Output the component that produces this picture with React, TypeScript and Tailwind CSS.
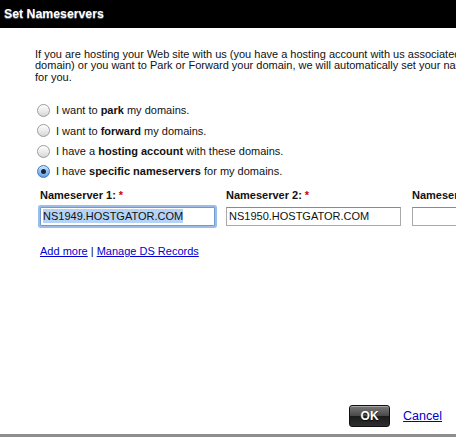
import { ReactNode } from "react";

const font = "font-['Liberation_Sans',Arial,sans-serif]";

interface RadioRowProps {
    checked?: boolean;
    children: ReactNode;
}

const RadioRow = ({ checked, children }: RadioRowProps) => (
    <div className="flex h-[20.4px] items-center">
        {checked ? (
            <span className="ml-[2px] flex h-[13px] w-[13px] items-center justify-center rounded-full border border-[#4a7ab8] bg-[radial-gradient(circle_at_50%_35%,#d8ecff_0%,#7fb6ef_55%,#3d84d6_100%)] shadow-[inset_0_1px_1px_rgba(255,255,255,0.7)]">
                <span className="h-[5px] w-[5px] rounded-full bg-[#16243a]" />
            </span>
        ) : (
            <span className="ml-[2px] h-[13px] w-[13px] rounded-full border border-[#9b9b9b] bg-[linear-gradient(180deg,#fdfdfd_0%,#ececec_50%,#d6d6d6_100%)] shadow-[inset_0_1px_1px_rgba(255,255,255,0.9)]" />
        )}
        <span className="ml-[6px] whitespace-nowrap text-[11px] text-[#111]">{children}</span>
    </div>
);

interface NsFieldProps {
    label: string;
    value?: string;
    focused?: boolean;
    required?: boolean;
}

const NsField = ({ label, value, focused, required }: NsFieldProps) => (
    <div className="flex w-[175px] shrink-0 flex-col">
        <div className="h-[12px] whitespace-nowrap text-[11px] font-bold leading-[12px] text-[#111]">
            {label}
            {required && <span className="ml-[3px] text-[#d40000]">*</span>}
        </div>
        <div
            className={
                focused
                    ? "mt-[6px] flex h-[19px] items-center rounded-[1px] border border-[#6f9bd4] bg-white px-[2px] shadow-[0_0_0_2px_rgba(124,166,224,0.75)]"
                    : "mt-[6px] flex h-[19px] items-center border border-[#a9a9a9] border-t-[#8a8a8a] bg-white px-[2px]"
            }
        >
            {value && (
                <span className={focused ? "bg-[#b5d3f7] text-[11px] leading-[14px] text-[#111]" : "text-[11px] leading-[14px] text-[#111]"}>
                    {value}
                </span>
            )}
        </div>
    </div>
);

const App = () => {
    return (
        <div className={`relative flex h-[437px] w-[456px] flex-col overflow-hidden bg-white ${font}`}>
            <div className="flex h-[28px] shrink-0 items-center bg-black px-[4px]">
                <span className="text-[12.3px] font-bold text-white [text-shadow:0_1px_1px_rgba(160,180,210,0.6)]">
                    Set Nameservers
                </span>
            </div>

            <div className="flex flex-1 flex-col pl-[35px] pt-[21px]">
                <p className="whitespace-nowrap text-[11px] leading-[11.4px] text-[#111]">
                    If you are hosting your Web site with us (you have a hosting account with us associated with this
                    <br />
                    domain) or you want to Park or Forward your domain, we will automatically set your nameservers
                    <br />
                    for you.
                </p>

                <div className="mt-[17px] flex flex-col">
                    <RadioRow>
                        I want to <b>park</b> my domains.
                    </RadioRow>
                    <RadioRow>
                        I want to <b>forward</b> my domains.
                    </RadioRow>
                    <RadioRow>
                        I have a <b>hosting account</b> with these domains.
                    </RadioRow>
                    <RadioRow checked>
                        I have <b>specific nameservers</b> for my domains.
                    </RadioRow>
                </div>

                <div className="ml-[5px] mt-[7px] flex gap-[11px]">
                    <NsField label="Nameserver 1:" value="NS1949.HOSTGATOR.COM" focused required />
                    <NsField label="Nameserver 2:" value="NS1950.HOSTGATOR.COM" required />
                    <NsField label="Nameserver 3:" />
                </div>

                <div className="ml-[5px] mt-[19px] text-[11px] leading-[12px] text-[#111]">
                    <a href="#" className="text-[#0000d0] underline">Add more</a>
                    {" | "}
                    <a href="#" className="text-[#0000d0] underline">Manage DS Records</a>
                </div>
            </div>

            <div className="flex shrink-0 items-center justify-end gap-[13px] pb-[7px] pr-[14px]">
                <button className="flex h-[22px] w-[41px] items-center justify-center rounded-[3px] border border-[#111] bg-[linear-gradient(180deg,#7a7a7a_0%,#4a4a4a_48%,#1c1c1c_52%,#2e2e2e_100%)] text-[12px] font-bold text-white shadow-[inset_0_1px_0_rgba(255,255,255,0.35)] [text-shadow:0_1px_1px_rgba(0,0,0,0.8)]">
                    OK
                </button>
                <a href="#" className="text-[12.5px] text-[#0000d0] underline">Cancel</a>
            </div>
            <div className="h-[3px] shrink-0 bg-[#8e8e8e]" />
        </div>
    );
};

export default App;
